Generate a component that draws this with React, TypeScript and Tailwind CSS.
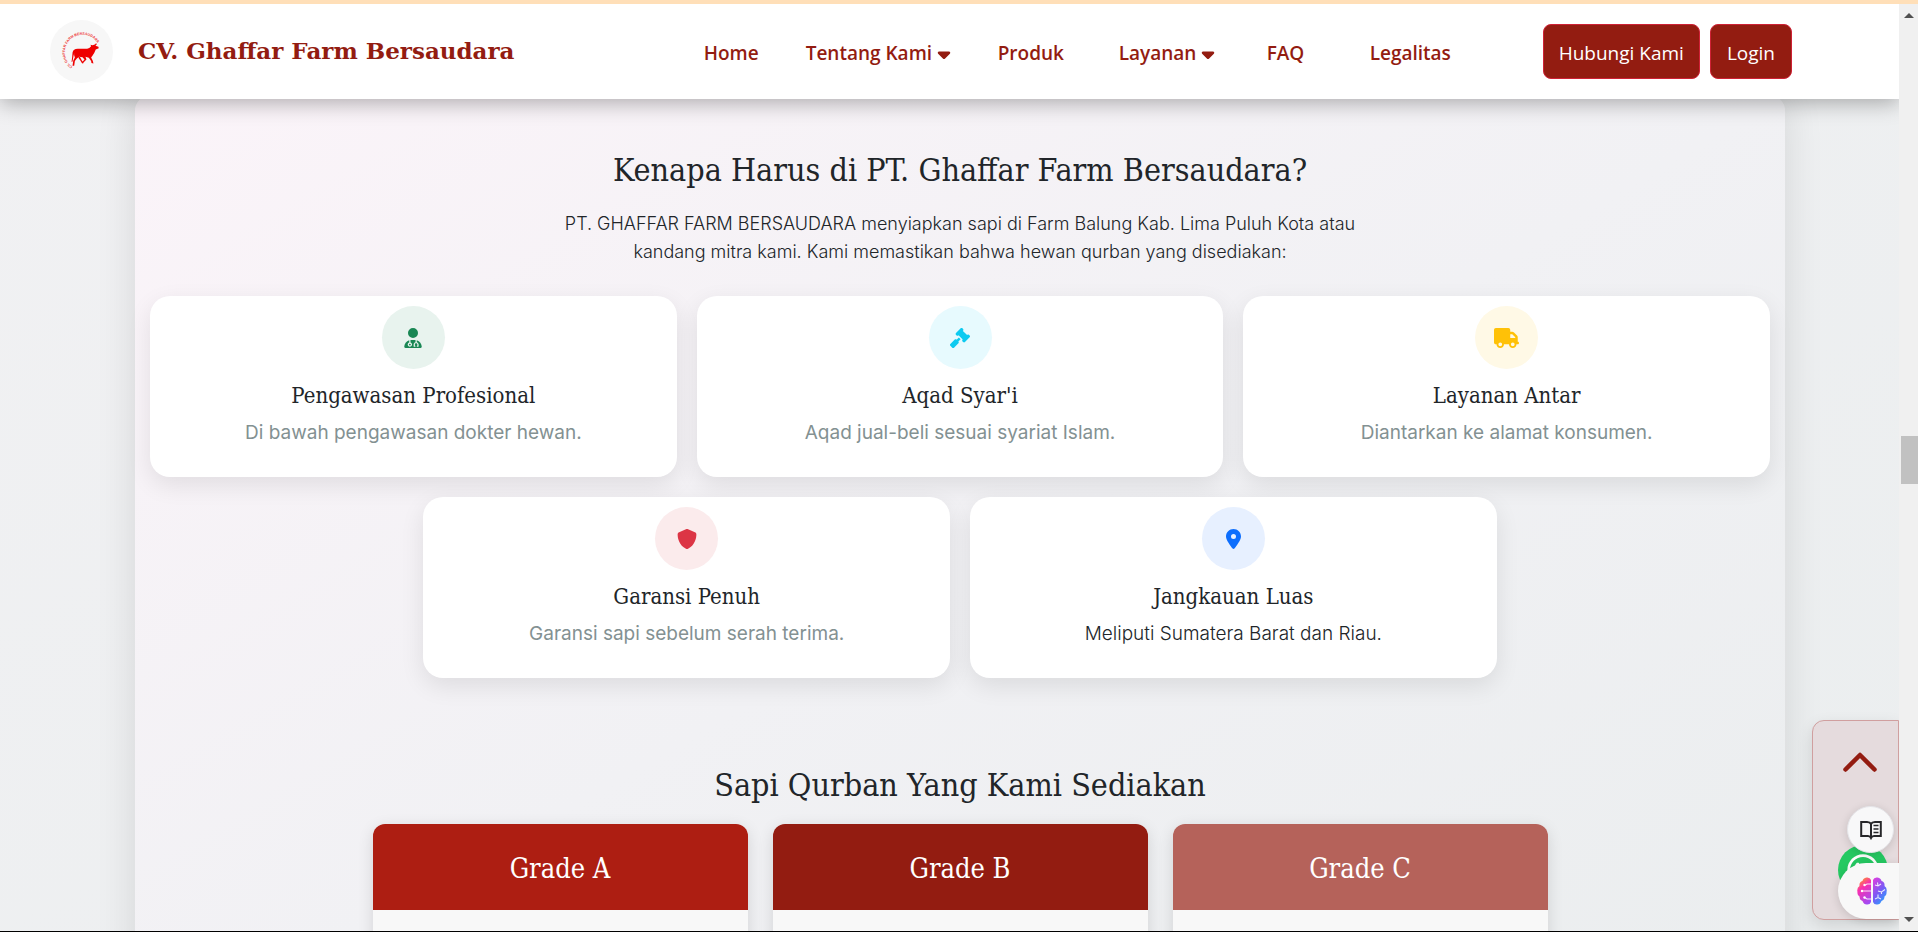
import React from "react";
import {
  FaCaretDown,
  FaGavel,
  FaLocationDot,
  FaShield,
  FaTruck,
  FaUserDoctor,
  FaWhatsapp,
} from "react-icons/fa6";

const serif = "font-['DejaVu_Serif_Condensed','DejaVu_Serif',serif]";
const sans = "font-[Inter,sans-serif]";

const navItems = [
  { label: "Home" },
  { label: "Tentang Kami", menu: true },
  { label: "Produk" },
  { label: "Layanan", menu: true },
  { label: "FAQ" },
  { label: "Legalitas" },
];

const features = [
  {
    title: "Pengawasan Profesional",
    text: "Di bawah pengawasan dokter hewan.",
    Icon: FaUserDoctor,
    iconSize: "h-5 w-[18px]",
    tone: "bg-[#e8f3ee] text-[#198754]",
    textTone: "text-[#839192]",
  },
  {
    title: "Aqad Syar'i",
    text: "Aqad jual-beli sesuai syariat Islam.",
    Icon: FaGavel,
    iconSize: "size-5",
    tone: "bg-[#e7fafe] text-[#0dcaf0]",
    textTone: "text-[#839192]",
  },
  {
    title: "Layanan Antar",
    text: "Diantarkan ke alamat konsumen.",
    Icon: FaTruck,
    iconSize: "h-5 w-[25px]",
    tone: "bg-[#fff9e6] text-[#ffc107]",
    textTone: "text-[#839192]",
  },
  {
    title: "Garansi Penuh",
    text: "Garansi sapi sebelum serah terima.",
    Icon: FaShield,
    iconSize: "size-5",
    tone: "bg-[#fbebec] text-[#dc3545]",
    textTone: "text-[#839192]",
  },
  {
    title: "Jangkauan Luas",
    text: "Meliputi Sumatera Barat dan Riau.",
    Icon: FaLocationDot,
    iconSize: "h-5 w-[15px]",
    tone: "bg-[#e7f0ff] text-[#0d6efd]",
    textTone: "text-[#212529] font-light",
  },
];

const grades = [
  { name: "Grade A", tone: "bg-[#ad1e12]" },
  { name: "Grade B", tone: "bg-[#931c11]" },
  { name: "Grade C", tone: "bg-[#b5625a]" },
];

function Logo() {
  return (
    <svg viewBox="30 30 190 190" className="size-[63px] shrink-0" aria-label="Ghaffar Farm">
      <circle cx="125" cy="125" r="95" fill="#f7f7f7" />
      <path id="ring" d="M98 171 A53 53 0 1 1 181 124" fill="none" />
      <text fill="#ee3a3a" fontFamily="'Liberation Sans Narrow', 'Liberation Sans', sans-serif" fontWeight="700" fontSize="11">
        <textPath href="#ring">CV. GHAFFAR FARM BERSAUDARA</textPath>
      </text>
      <path
        fill="#ee0000"
        d="M103 120 Q107 116 118 117 L142 117 Q149 116 154 109 L152 105 L158 106 L163 105 Q167 103 169 99 L171 104 L167 108 L176 111 L177 115 L168 119 Q164 130 158 138 L154 143 L159 153 L161 161 L155 160 L154 154 L147 144 L137 141 L140 149 L131 158 L128 156 L134 149 L128 142 L118 141 L111 146 L105 154 L103 168 L98 168 L100 153 L105 143 Q101 137 103 130 L101 138 L98 155 L95 157 L97 140 L98 128 Q99 122 103 120Z"
      />
      <path fill="#ee0000" d="M120 141 L126 152 L132 160 L127 161 L122 153 L115 143Z" />
    </svg>
  );
}

function Header() {
  return (
    <header className="relative z-10 flex h-[95px] shrink-0 items-center bg-white pr-[107px] pl-[50px] shadow-[0_4px_20px_rgba(0,0,0,0.3)]">
      <a href="#home" className="flex items-center gap-[25px]">
        <Logo />
        <span className="font-['DejaVu_Serif',serif] text-[23px] font-bold whitespace-nowrap text-[#931c11]">
          CV. Ghaffar Farm Bersaudara
        </span>
      </a>
      <nav className="ml-auto grid grid-cols-[102px_192px_121px_148px_103px_83px] pt-1 font-['Open_Sans',sans-serif] text-[19px] font-semibold text-[#931c11]">
        {navItems.map(({ label, menu }) => (
          <a key={label} href={"#" + label.toLowerCase()} className="flex items-center gap-0.5 whitespace-nowrap">
            {label}
            {menu && <FaCaretDown className="size-5" />}
          </a>
        ))}
      </nav>
      <div className="ml-[90px] flex gap-[10px] font-['Open_Sans',sans-serif] text-[19px] text-white">
        <button className="h-[55px] rounded-lg border border-[#cf2135] bg-[#931c11] px-[15px] pt-1 whitespace-nowrap">
          Hubungi Kami
        </button>
        <button className="h-[55px] rounded-lg border border-[#cf2135] bg-[#931c11] px-4 pt-1">Login</button>
      </div>
    </header>
  );
}

function FeatureCard({ title, text, Icon, iconSize, tone, textTone }: (typeof features)[number]) {
  return (
    <article className="flex h-[181px] w-[calc((100%-40px)/3)] flex-col items-center rounded-[20px] bg-white pt-[10px] shadow-[0_8px_24px_rgba(0,0,0,0.09)]">
      <span className={"grid size-[63px] place-items-center rounded-full " + tone}>
        <Icon className={iconSize} />
      </span>
      <h3 className={serif + " mt-3 text-[22px] leading-[30px] text-[#212529]"}>{title}</h3>
      <p className={sans + " mt-2 text-[19px] leading-[28px] " + textTone}>{text}</p>
    </article>
  );
}

function BookIcon() {
  return (
    <svg viewBox="0 0 22 20" className="h-5 w-[22px]" fill="none" stroke="#27272a" strokeWidth="2">
      <path d="M11 4 Q10 2 7 2 H1.2 V16 H8 Q10 16 11 18 Q12 16 14 16 H20.800 V2 H15 Q12 2 11 4 V18" />
      <path d="M13.500 5.500 H18.500 M13.500 9 H18.500 M13.500 12.500 H18.500" strokeWidth="1.500" />
    </svg>
  );
}

function BrainIcon() {
  return (
    <svg viewBox="0 0 30 28" className="h-7 w-[30px]">
      <defs>
        <linearGradient id="brainLeft" x1="0.3" y1="0" x2="0.7" y2="1">
          <stop offset="0" stopColor="#ff9a1f" />
          <stop offset="0.35" stopColor="#f92fb0" />
          <stop offset="1" stopColor="#a04cf5" />
        </linearGradient>
        <linearGradient id="brainRight" x1="0.2" y1="0" x2="0.8" y2="1">
          <stop offset="0" stopColor="#d63fe0" />
          <stop offset="0.5" stopColor="#7a5af5" />
          <stop offset="1" stopColor="#20a8ff" />
        </linearGradient>
      </defs>
      <path
        fill="url(#brainLeft)"
        d="M14 3 Q13 0 9.500 0.500 Q6 1 5.500 4 Q2 5 2.500 9 Q-0.500 11 0.500 15 Q0 18 2.500 19.500 Q2.500 23 5.500 24 Q7 28 10.500 27.500 Q13 27.500 14 25Z"
      />
      <path
        fill="url(#brainRight)"
        d="M16 3 Q17 0 20.500 0.500 Q24 1 24.500 4 Q28 5 27.500 9 Q30.500 11 29.500 15 Q30 18 27.500 19.500 Q27.500 23 24.500 24 Q23 28 19.500 27.500 Q17 27.500 16 25Z"
      />
      <g fill="none" stroke="#fff" strokeOpacity="0.85" strokeWidth="1.100">
        <path d="M14 7 H10 L7.500 8.500 M14 14 H5 M14 22 H10 L7.500 20.500" />
        <path d="M18 8 L21 9 L24 7 M21 9 L20.500 5.500 M21 14 L24.500 15 L28 12.500 M24.500 15 V17 M18 22 L21 20.500 L24 22 M21 20.500 V17.500" />
      </g>
      <g fill="#fff">
        <circle cx="7.500" cy="8" r="1.200" />
        <circle cx="5" cy="14" r="1.200" />
        <circle cx="7.500" cy="20.500" r="1.200" />
      </g>
    </svg>
  );
}

function FloatingTools() {
  return (
    <aside className="absolute right-0 bottom-[11px] z-20 h-[200px] w-[87px] rounded-l-xl border border-[#d09f9f] bg-[#e5dbdd] shadow-[0_6px_16px_rgba(0,0,0,0.12)]">
      <button aria-label="Ke atas" className="absolute top-[30px] left-[30px]">
        <svg viewBox="0 0 34 22" className="h-[22px] w-[34px]" fill="none" stroke="#931c11" strokeWidth="4.5" strokeLinecap="round" strokeLinejoin="round">
          <path d="M2.500 18.500 L17 4 L31.500 18.500" />
        </svg>
      </button>
      <a href="#whatsapp" aria-label="WhatsApp" className="absolute top-[124px] left-[25px] grid size-[50px] place-items-center rounded-full bg-[#25c962] text-white">
        <FaWhatsapp className="size-9" />
      </a>
      <button aria-label="Baca" className="absolute top-[85px] right-1 grid size-[47px] place-items-center rounded-full border border-[#e6e6ea] bg-[#f8f8f9] shadow-[0_2px_10px_rgba(0,0,0,0.14)]">
        <BookIcon />
      </button>
      <button aria-label="Asisten" className="absolute -right-px bottom-0 flex h-[56px] w-[61px] items-center rounded-l-full bg-[#f8f8f8] pl-[19px] shadow-[0_2px_10px_rgba(0,0,0,0.14)]">
        <BrainIcon />
      </button>
    </aside>
  );
}

function ScrollTrack() {
  return (
    <div aria-hidden="true" className="flex w-[19px] shrink-0 flex-col items-end bg-[#f0f0f0] py-[9px]">
      <svg viewBox="0 0 10 5" className="mr-1 h-[5px] w-[10px]" fill="#505050">
        <path d="M5 0 L10 5 H0Z" />
      </svg>
      <div className="grow-[418]" />
      <div className="h-12 w-[17px] bg-[#c1c1c1]" />
      <div className="grow-[434]" />
      <svg viewBox="0 0 10 5" className="mr-1 h-[5px] w-[10px]" fill="#505050">
        <path d="M0 0 H10 L5 5Z" />
      </svg>
    </div>
  );
}

export default function App() {
  return (
    <div className="flex h-screen flex-col overflow-hidden border-t-4 border-b border-t-[#ffdfb8] border-b-black">
      <div className="flex min-h-0 flex-1">
        <div className="relative flex min-w-0 flex-1 flex-col overflow-hidden bg-linear-to-br from-[#f1f1f3] to-[#ebeeef]">
          <Header />
          <main className="min-h-0 flex-1 pr-[114px] pl-[135px]">
            <div className="-mt-1 min-h-[900px] rounded-2xl bg-linear-to-br from-[#fbf4f9] via-[#f1f1f4] to-[#eaedee] px-[15px] pt-[52px] shadow-[0_0_40px_rgba(0,0,0,0.11)]">
              <section className="flex flex-col items-center">
                <h2 className={serif + " text-[32px] leading-[46px] text-[#212529]"}>
                  Kenapa Harus di PT. Ghaffar Farm Bersaudara?
                </h2>
                <p className={sans + " mt-[17px] max-w-[900px] text-center text-[18px] leading-[28px] font-light text-[#212529]"}>
                  PT. GHAFFAR FARM BERSAUDARA menyiapkan sapi di Farm Balung Kab. Lima Puluh Kota atau
                  <br />
                  kandang mitra kami. Kami memastikan bahwa hewan qurban yang disediakan:
                </p>
                <div className="mt-[30px] flex w-full flex-wrap justify-center gap-5">
                  {features.map((feature) => (
                    <FeatureCard key={feature.title} {...feature} />
                  ))}
                </div>
              </section>
              <section className="mt-[84px] flex flex-col items-center">
                <h2 className={serif + " text-[32px] leading-[46px] text-[#212529]"}>
                  Sapi Qurban Yang Kami Sediakan
                </h2>
                <div className="mt-4 grid w-full max-w-[1175px] grid-cols-3 gap-[25px]">
                  {grades.map(({ name, tone }) => (
                    <article key={name} className="min-h-[240px] overflow-hidden rounded-xl bg-[#f8f8f8] shadow-[0_4px_16px_rgba(0,0,0,0.12)]">
                      <h3 className={serif + " grid h-[86px] place-items-center pt-1 text-[27px] font-medium text-white " + tone}>
                        {name}
                      </h3>
                    </article>
                  ))}
                </div>
              </section>
            </div>
          </main>
          <FloatingTools />
        </div>
        <ScrollTrack />
      </div>
    </div>
  );
}
